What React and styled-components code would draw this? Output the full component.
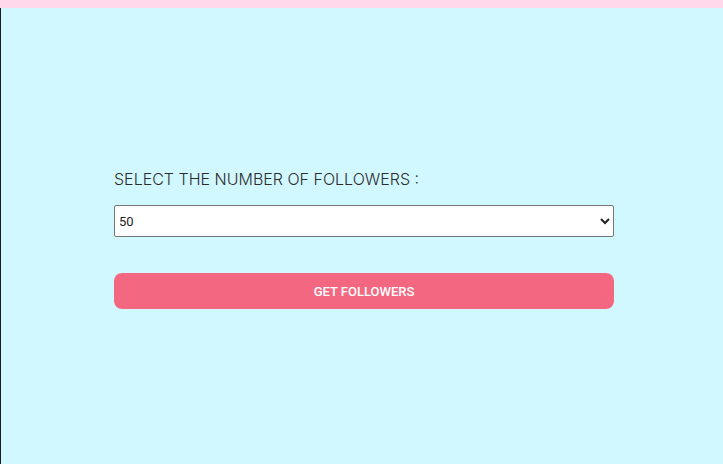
import React from 'react';
import styled, { createGlobalStyle } from 'styled-components';

const GlobalStyle = createGlobalStyle`
    html, body {
        margin: 0;
        padding: 0;
        height: 100%;
        background: #ffd9eb;
    }
    #root {
        height: 100%;
        padding-top: 8px;
        box-sizing: border-box;
    }
`;

const Page = styled.div`
    height: 100%;
    background: #d2f8ff;
    border-left: 1px solid #1e1e1e;
    box-sizing: border-box;
    padding: 161px 0 0 113px;
`;

const Form = styled.div`
    width: 500px;
    display: flex;
    flex-direction: column;
`;

const Label = styled.label`
    font-family: Inter, "Noto Sans", sans-serif;
    font-weight: 300;
    font-size: 16px;
    letter-spacing: 0;
    color: #2c2c2c;
    line-height: 20px;
    margin-bottom: 16px;
`;

const Select = styled.select`
    width: 100%;
    height: 32px;
    font-family: Roboto, "Liberation Sans", sans-serif;
    font-size: 13px;
    font-weight: 400;
    color: #222;
    background: #fff;
    border: 1px solid #767676;
    border-radius: 2px;
    padding: 0;
    margin-bottom: 36px;
`;

const Button = styled.button`
    width: 100%;
    height: 36px;
    border: none;
    border-radius: 8px;
    background: #f36880;
    color: #fff;
    font-family: Roboto, "Liberation Sans", sans-serif;
    font-weight: 500;
    font-size: 13px;
    cursor: pointer;
`;

const options = [10, 20, 50, 100];

export default function App() {
    return (
        <>
            <GlobalStyle />
            <Page>
                <Form>
                    <Label htmlFor="count">SELECT THE NUMBER OF FOLLOWERS :</Label>
                    <Select id="count" defaultValue={50}>
                        {options.map(n => (
                            <option key={n} value={n}>{n}</option>
                        ))}
                    </Select>
                    <Button>GET FOLLOWERS</Button>
                </Form>
            </Page>
        </>
    );
}
